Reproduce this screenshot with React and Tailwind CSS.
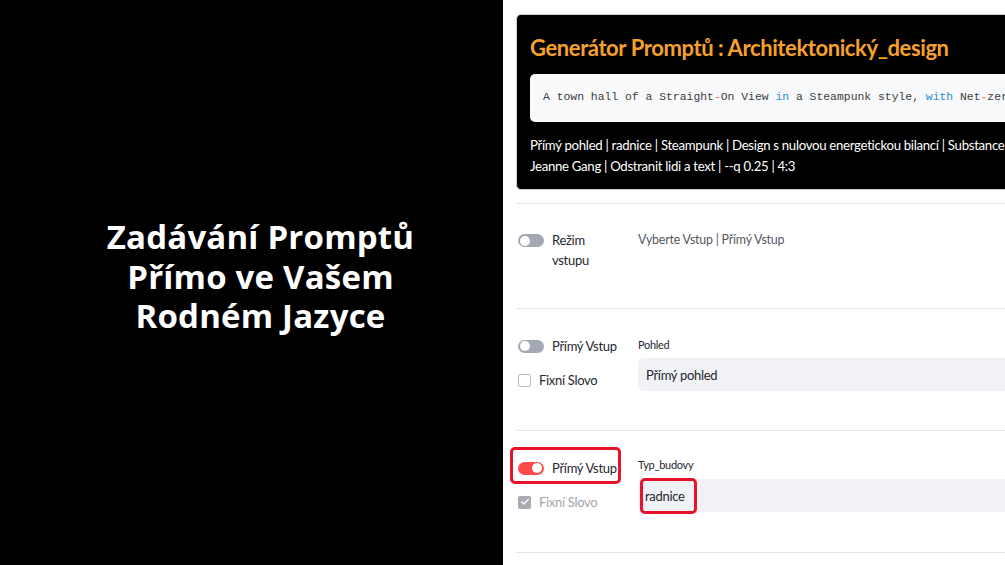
import { Check } from 'lucide-react';

const sans = "font-['Lato','Noto_Sans',sans-serif]";

function Toggle({ on }) {
  return (
    <div
      className={`relative w-[26px] h-[13px] rounded-full shrink-0 ${on ? 'bg-[#ff4b4b]' : 'bg-[#a3a8b4]'}`}
    >
      <div
        className={`absolute top-[1.5px] w-[10px] h-[10px] rounded-full bg-white ${on ? 'right-[2px]' : 'left-[2px]'}`}
      />
    </div>
  );
}

function Checkbox({ checked }) {
  if (checked) {
    return (
      <div className="w-[13px] h-[13px] rounded-[2px] bg-[#a9abb2] flex items-center justify-center shrink-0">
        <Check size={10} strokeWidth={3.5} className="text-white" />
      </div>
    );
  }
  return <div className="w-[13px] h-[13px] rounded-[2px] border border-[#b9bcc4] bg-white shrink-0" />;
}

export default function App() {
  return (
    <div className={`flex w-[1005px] h-[565px] overflow-hidden ${sans}`}>
      <div className="w-[503px] shrink-0 bg-black flex items-center justify-center pb-[12px] pl-[18px]">
        <h1 className="text-white font-bold text-[33px] leading-[39.5px] text-center tracking-[0.2px] font-['Open_Sans','Noto_Sans',sans-serif]">
          Zadávání Promptů
          <br />
          Přímo ve Vašem
          <br />
          Rodném Jazyce
        </h1>
      </div>

      <div className="flex-1 bg-white overflow-hidden pl-[13px] pt-[14px]">
        <div className="w-[640px]">
          <div className="bg-black rounded-[5px] border border-[#d0d0d0] px-[13px] pt-[19px] pb-[12px]">
            <h2 className="text-[#f7a12b] font-bold text-[22px] leading-[28px] tracking-[-0.4px]">
              Generátor Promptů : Architektonický_design
            </h2>
            <div className="mt-[12px] h-[48px] bg-[#f8f9fb] rounded-[5px] flex items-center pl-[13px] whitespace-nowrap overflow-hidden font-['Liberation_Mono','DejaVu_Sans_Mono',monospace] text-[11.4px] text-[#3d3d3d]">
              <span>
                A town hall of a Straight<span className="text-[#e8692a]">-</span>On View{' '}
                <span className="text-[#1c8fd6]">in</span> a Steampunk style,{' '}
                <span className="text-[#1c8fd6]">with</span> Net<span className="text-[#e8692a]">-</span>zero energy design
              </span>
            </div>
            <div className="mt-[13px] text-white text-[13.2px] leading-[21px] tracking-[-0.3px] whitespace-nowrap">
              <p>Přímý pohled | radnice | Steampunk | Design s nulovou energetickou bilancí | Substance |</p>
              <p>Jeanne Gang | Odstranit lidi a text | --q 0.25 | 4:3</p>
            </div>
          </div>

          <div className="mt-[13px] border-t border-[#e3e4e8] h-[105px] pt-[26px] flex text-[13px] leading-[20px] tracking-[-0.3px] text-[#262730]">
            <div className="w-[122px] pl-[2px] flex items-start gap-[8px]">
              <div className="pt-[4px]">
                <Toggle />
              </div>
              <span>
                Režim
                <br />
                vstupu
              </span>
            </div>
            <div className="text-[#55575f] text-[12.4px] tracking-[-0.2px]">Vyberte Vstup | Přímý Vstup</div>
          </div>

          <div className="border-t border-[#e3e4e8] h-[122px] pt-[27px] flex text-[13px] leading-[20px] tracking-[-0.3px] text-[#262730]">
            <div className="w-[122px] pl-[2px] flex flex-col gap-[14px]">
              <div className="flex items-center gap-[8px]">
                <Toggle />
                <span>Přímý Vstup</span>
              </div>
              <div className="flex items-center gap-[8px]">
                <Checkbox />
                <span>Fixní Slovo</span>
              </div>
            </div>
            <div className="flex-1">
              <div className="text-[11px] leading-[16px] pt-[1px]">Pohled</div>
              <div className="mt-[5px] h-[33px] bg-[#f0f2f6] rounded-[6px] flex items-center pl-[8px]">Přímý pohled</div>
            </div>
          </div>

          <div className="border-t border-[#e3e4e8] h-[122px] pt-[27px] flex text-[13px] leading-[20px] tracking-[-0.3px] text-[#262730]">
            <div className="w-[122px] pl-[2px] flex flex-col gap-[14px]">
              <div className="relative flex items-center gap-[8px]">
                <div className="absolute -left-[8px] -top-[11px] w-[111px] h-[37px] border-[3px] border-[#e8132b] rounded-[5px]" />
                <Toggle on />
                <span>Přímý Vstup</span>
              </div>
              <div className="flex items-center gap-[8px] text-[#a3a5ad]">
                <Checkbox checked />
                <span>Fixní Slovo</span>
              </div>
            </div>
            <div className="flex-1">
              <div className="text-[11px] leading-[16px] -mt-[1px]">Typ_budovy</div>
              <div className="relative mt-[6px] h-[33px] bg-[#f0f2f6] rounded-[6px] flex items-center pl-[7px]">
                <div className="absolute left-[2px] -top-[1px] w-[57px] h-[36px] border-[3px] border-[#e8132b] rounded-[5px]" />
                radnice
              </div>
            </div>
          </div>

          <div className="border-t border-[#e3e4e8]" />
        </div>
      </div>
    </div>
  );
}
